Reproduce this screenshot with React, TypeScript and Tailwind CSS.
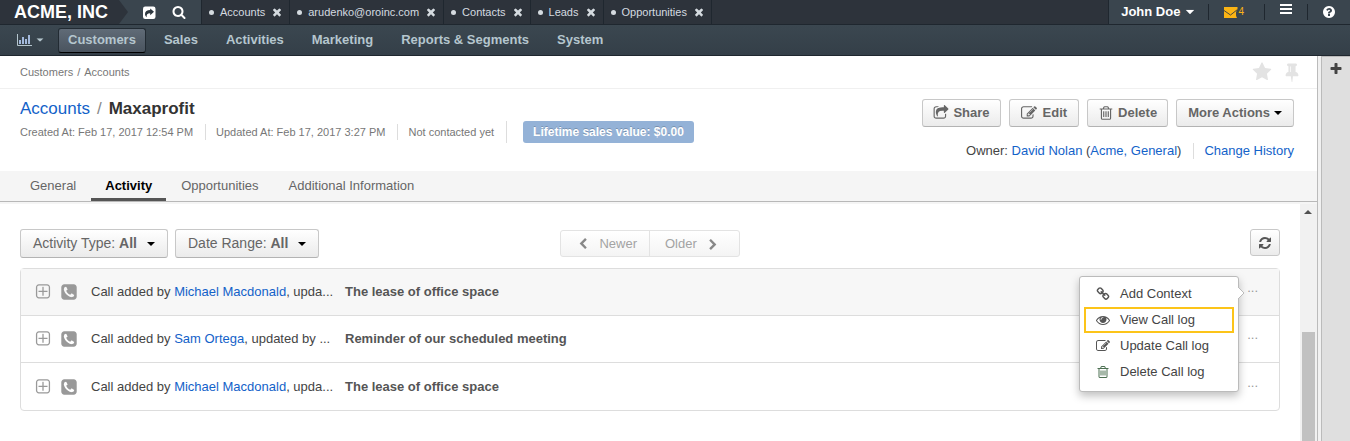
import type { ReactNode } from "react";

const paths = {
  search:
    "M1216 832q0-185-131.5-316.5t-316.5-131.5-316.5 131.5-131.5 316.5 131.5 316.5 316.5 131.5 316.5-131.5 131.5-316.5zm512 832q0 52-38 90t-90 38q-54 0-90-38l-343-342q-179 124-399 124-143 0-273.5-55.5t-225-150-150-225-55.5-273.5 55.5-273.5 150-225 225-150 273.5-55.5 273.5 55.5 225 150 150 225 55.5 273.5q0 220-124 399l343 343q37 37 37 90z",
  times:
    "M1490 1322q0 40-28 68l-136 136q-28 28-68 28t-68-28l-294-294-294 294q-28 28-68 28t-68-28l-136-136q-28-28-28-68t28-68l294-294-294-294q-28-28-28-68t28-68l136-136q28-28 68-28t68 28l294 294 294-294q28-28 68-28t68 28l136 136q28 28 28 68t-28 68l-294 294 294 294q28 28 28 68z",
  plus: "M1600 736v192q0 40-28 68t-68 28h-416v416q0 40-28 68t-68 28h-192q-40 0-68-28t-28-68v-416h-416q-40 0-68-28t-28-68v-192q0-40 28-68t68-28h416v-416q0-40 28-68t68-28h192q40 0 68 28t28 68v416h416q40 0 68 28t28 68z",
  question:
    "M1024 1376v-192q0-14-9-23t-23-9h-192q-14 0-23 9t-9 23v192q0 14 9 23t23 9h192q14 0 23-9t9-23zm256-672q0-88-55.5-163t-138.5-116-170-41q-243 0-371 213-15 24 8 42l132 100q7 6 19 6 16 0 25-12 53-68 86-92 34-24 86-24 48 0 85.5 26t37.5 59q0 38-20 61t-68 45q-63 28-115.5 86.5t-52.5 125.5v36q0 14 9 23t23 9h192q14 0 23-9t9-23q0-19 21.5-49.5t54.5-49.5q32-18 49-28.5t46-35 44.5-48 28-60.5 12.5-81zm384 192q0 209-103 385.5t-279.5 279.5-385.5 103-385.5-103-279.5-279.5-103-385.5 103-385.5 279.5-279.5 385.5-103 385.5 103 279.5 279.5 103 385.5z",
  star: "M1728 647q0 22-26 48l-363 354 86 500q1 7 1 20 0 21-10.5 35.5t-30.5 14.5q-19 0-40-12l-449-236-449 236q-22 12-40 12-21 0-31.5-14.5t-10.5-35.5q0-6 2-20l86-500-364-354q-25-27-25-48 0-37 56-46l502-73 225-455q19-41 49-41t49 41l225 455 502 73q56 9 56 46z",
  pin: "M800 864v-448q0-14-9-23t-23-9-23 9-9 23v448q0 14 9 23t23 9 23-9 9-23zm672 352q0 26-19 45t-45 19h-429l-51 483q-2 12-10.5 20.5t-20.5 8.5h-1q-27 0-32-27l-76-485h-404q-26 0-45-19t-19-45q0-123 78.5-221.5t177.5-98.5v-512q-52 0-90-38t-38-90 38-90 90-38h640q52 0 90 38t38 90-38 90-90 38v512q99 0 177.5 98.5t78.5 221.5z",
  share:
    "M1472 989v259q0 119-84.5 203.5t-203.5 84.5h-832q-119 0-203.5-84.5t-84.5-203.5v-832q0-119 84.5-203.5t203.5-84.5h255q13 0 22.5 9.5t9.5 22.5q0 27-26 32-77 26-133 60-10 4-16 4h-112q-66 0-113 47t-47 113v832q0 66 47 113t113 47h832q66 0 113-47t47-113v-214q0-19 18-29 28-13 54-37 16-16 35-8 21 9 21 29zm237-496l-384 384q-18 19-45 19-12 0-25-5-39-17-39-59v-192h-160q-323 0-438 131-119 137-74 473 3 23-20 34-8 2-12 2-16 0-26-13-10-14-21-31t-39.5-68.5-49.5-99.5-38.5-114-17.5-122q0-49 3.5-91t14-90 28-88 47-81.5 68.5-74 94.5-61.5 124.5-48.5 159.5-30.5 196.5-11h160v-192q0-42 39-59 13-5 25-5 26 0 45 19l384 384q19 19 19 45t-19 45z",
  edit: "M888 1184l116-116-152-152-116 116v56h96v96h56zm440-720q-16-16-33 1l-350 350q-17 17-1 33t33-1l350-350q17-17 1-33zm80 594v190q0 119-84.5 203.5t-203.5 84.5h-832q-119 0-203.5-84.5t-84.5-203.5v-832q0-119 84.5-203.5t203.5-84.5h832q63 0 117 25 15 7 18 23 3 17-9 29l-49 49q-14 14-32 8-23-6-45-6h-832q-66 0-113 47t-47 113v832q0 66 47 113t113 47h832q66 0 113-47t47-113v-126q0-13 9-22l64-64q15-15 35-7t20 29zm-96-738l288 288-672 672h-288v-288zm444 132l-92 92-288-288 92-92q28-28 68-28t68 28l152 152q28 28 28 68t-28 68z",
  trash:
    "M704 736v576q0 14-9 23t-23 9h-64q-14 0-23-9t-9-23v-576q0-14 9-23t23-9h64q14 0 23 9t9 23zm256 0v576q0 14-9 23t-23 9h-64q-14 0-23-9t-9-23v-576q0-14 9-23t23-9h64q14 0 23 9t9 23zm256 0v576q0 14-9 23t-23 9h-64q-14 0-23-9t-9-23v-576q0-14 9-23t23-9h64q14 0 23 9t9 23zm128 724v-948h-896v948q0 22 7 40.5t14.5 27 10.5 8.5h832q3 0 10.5-8.5t14.5-27 7-40.5zm-672-1076h448l-48-117q-7-9-17-11h-317q-10 2-17 11zm928 32v64q0 14-9 23t-23 9h-96v948q0 83-47 143.5t-113 60.5h-832q-66 0-113-58.5t-47-141.5v-952h-96q-14 0-23-9t-9-23v-64q0-14 9-23t23-9h309l70-167q15-37 54-63t79-26h320q40 0 79 26t54 63l70 167h309q14 0 23 9t9 23z",
  expand:
    "M1344 800v64q0 14-9 23t-23 9h-352v352q0 14-9 23t-23 9h-64q-14 0-23-9t-9-23v-352h-352q-14 0-23-9t-9-23v-64q0-14 9-23t23-9h352v-352q0-14 9-23t23-9h64q14 0 23 9t9 23v352h352q14 0 23 9t9 23zm128 448v-832q0-66-47-113t-113-47h-832q-66 0-113 47t-47 113v832q0 66 47 113t113 47h832q66 0 113-47t47-113zm128-832v832q0 119-84.5 203.5t-203.5 84.5h-832q-119 0-203.5-84.5t-84.5-203.5v-832q0-119 84.5-203.5t203.5-84.5h832q119 0 203.5 84.5t84.5 203.5z",
  phone:
    "M1408 1193q0-11-2-16t-18-16.5-40.5-25-47.5-26.5-45.5-25-28.5-15q-5-3-19-13t-25-15-21-5q-15 0-36.5 20.5t-39.5 45-38.5 45-33.5 20.5q-7 0-16.5-3.5t-15.5-6.5-17-9.5-14-8.5q-99-55-170-126.5t-127-170.5q-2-3-8.5-14t-9.5-17-6.5-15.5-3.5-16.5q0-13 20.5-33.5t45-38.5 45-39.5 20.5-36.5q0-10-5-21t-15-25-13-19q-3-6-15-28.5t-25-45.5-26.5-47.5-25-40.5-16.5-18-16-2q-48 0-101 22-46 21-80 94.5t-34 130.5q0 16 2.5 34t5 30.5 9 33 10 29.5 12.5 33 11 30q60 164 216.5 320.5t320.5 216.5q6 2 30 11t33 12.5 29.5 10 33 9 30.5 5 34 2.5q57 0 130.5-34t94.5-80q22-53 22-101zm256-777v960q0 119-84.5 203.5t-203.5 84.5h-960q-119 0-203.5-84.5t-84.5-203.5v-960q0-119 84.5-203.5t203.5-84.5h960q119 0 203.5 84.5t84.5 203.5z",
  eye: "M1664 960q-152-236-381-353 61 104 61 225 0 185-131.5 316.5t-316.5 131.5-316.5-131.5-131.5-316.5q0-121 61-225-229 117-381 353 133 205 333.5 326.5t434.5 121.5 434.5-121.5 333.5-326.5zm-720-384q0-20-14-34t-34-14q-125 0-214.5 89.5t-89.5 214.5q0 20 14 34t34 14 34-14 14-34q0-86 61-147t147-61q20 0 34-14t14-34zm848 384q0 34-20 69-140 230-376.5 368.5t-499.5 138.5-499.5-139-376.5-368q-20-35-20-69t20-69q140-229 376.5-368t499.5-139 499.5 139 376.5 368q20 35 20 69z",
  link: "M1520 1216q0-40-28-68l-208-208q-28-28-68-28-42 0-72 32 3 3 19 18.5t21.5 21.5 15 19 13 25.5 3.5 27.5q0 40-28 68t-68 28q-15 0-27.5-3.5t-25.5-13-19-15-21.5-21.5-18.5-19q-33 31-33 73 0 40 28 68l206 207q27 27 68 27 40 0 68-26l147-146q28-28 28-67zm-703-705q0-40-28-68l-206-207q-28-28-68-28-39 0-68 27l-147 146q-28 28-28 67 0 40 28 68l208 208q27 27 68 27 42 0 72-31-3-3-19-18.5t-21.5-21.5-15-19-13-25.5-3.5-27.5q0-40 28-68t68-28q15 0 27.5 3.5t25.5 13 19 15 21.5 21.5 18.5 19q33-31 33-73zm895 705q0 120-85 203l-147 146q-83 83-203 83-121 0-204-85l-206-207q-83-83-83-203 0-123 88-209l-88-88q-86 88-208 88-120 0-204-84l-208-208q-84-84-84-204t85-203l147-146q83-83 203-83 121 0 204 85l206 207q83 83 83 203 0 123-88 209l88 88q86-88 208-88 120 0 204 84l208 208q84 84 84 204z",
  refresh:
    "M1639 1056q0 5-1 7-64 268-268 434.5t-478 166.5q-146 0-282.5-55t-243.5-157l-129 129q-19 19-45 19t-45-19-19-45v-448q0-26 19-45t45-19h448q26 0 45 19t19 45-19 45l-137 137q71 66 161 102t187 36q134 0 250-65t186-179q11-17 53-117 8-23 30-23h192q13 0 22.5 9.5t9.5 22.5zm25-800v448q0 26-19 45t-45 19h-448q-26 0-45-19t-19-45 19-45l138-138q-148-137-349-137-134 0-250 65t-186 179q-11 17-53 117-8 23-30 23h-199q-13 0-22.5-9.5t-9.5-22.5v-7q65-268 270-434.5t480-166.5q146 0 284 55.5t245 156.5l130-129q19-19 45-19t45 19 19 45z",
  chevronLeft:
    "M1427 301l-531 531 531 531q19 19 19 45t-19 45l-166 166q-19 19-45 19t-45-19l-742-742q-19-19-19-45t19-45l742-742q19-19 45-19t45 19l166 166q19 19 19 45t-19 45z",
};

function Icon({ name, className }: { name: keyof typeof paths; className: string }) {
  return (
    <svg viewBox="0 0 1792 1792" fill="currentColor" aria-hidden="true" className={`shrink-0 ${className}`}>
      <path d={paths[name]} />
    </svg>
  );
}

function Caret({ className = "" }: { className?: string }) {
  return (
    <svg viewBox="0 0 8 4" fill="currentColor" aria-hidden="true" className={`h-1 w-2 shrink-0 ${className}`}>
      <path d="M0 0h8L4 4z" />
    </svg>
  );
}

function Btn({ children, className }: { children: ReactNode; className: string }) {
  return (
    <button
      type="button"
      className={`flex items-center rounded-[3px] border border-[#c8c8c8] border-b-[#b3b3b3] bg-linear-to-b from-white to-[#ebebeb] text-[#666] ${className}`}
    >
      {children}
    </button>
  );
}

const pinned = ["Accounts", "arudenko@oroinc.com", "Contacts", "Leads", "Opportunities"];
const sections = ["Sales", "Activities", "Marketing", "Reports & Segments", "System"];
const activities = [
  { person: "Michael Macdonald", rest: ", upda...", subject: "The lease of office space" },
  { person: "Sam Ortega", rest: ", updated by ...", subject: "Reminder of our scheduled meeting" },
  { person: "Michael Macdonald", rest: ", upda...", subject: "The lease of office space" },
];

function TopBar() {
  return (
    <div className="flex h-[25px] items-stretch border-b border-[#1f272f] bg-[#2d333b]">
      <a href="#home" className="flex items-center bg-[#3a454e] text-[18px] leading-6 font-bold text-white">
        <span className="flex h-full items-center bg-[#2d333b] pl-3.5">ACME, INC</span>
        <svg viewBox="0 0 20 24" aria-hidden="true" className="h-6 w-5">
          <path d="M0 0h11l9 12-9 12H0z" fill="#2d333b" />
        </svg>
      </a>
      <div className="flex items-center gap-4 border-r border-[#1f272f] bg-[#3a454e] pr-[15px] pl-[15px] text-white">
        <button type="button" aria-label="Shortcuts">
          <svg viewBox="0 0 13 13" aria-hidden="true" className="h-[13px] w-[13px]">
            <rect y="0.5" width="12.5" height="12.5" rx="2.2" fill="#fff" />
            <path
              d="M7.2 2.400v1.700C4 4.100 2 5.400 2 8c0 1.300.6 2.400 1.700 3.200-.4-2.600.6-3.900 3.500-3.900v1.900L11 5.800z"
              fill="#2d373f"
            />
          </svg>
        </button>
        <button type="button" aria-label="Search">
          <Icon name="search" className="h-[14px] w-[14px]" />
        </button>
      </div>
      <ul className="flex text-[11px] text-[#d5dbe0]">
        {pinned.map((label) => (
          <li key={label} className="flex items-center border-r border-[#1f272f] pr-1.5 pl-[7px]">
            <span className="mr-1.5 h-[5px] w-[5px] rounded-full bg-[#d5dbe0]" />
            <a href="#page">{label}</a>
            <button type="button" aria-label={`Close ${label}`} className="ml-1.5">
              <Icon name="times" className="h-3 w-3" />
            </button>
          </li>
        ))}
      </ul>
      <div className="ml-auto flex items-center border-l border-[#1f272f] bg-[#3a454e] text-white">
        <button type="button" className="flex items-center gap-1.5 pr-3.5 pl-3 text-[13px] leading-4 font-bold">
          John Doe
          <Caret className="scale-110" />
        </button>
        <button
          type="button"
          aria-label="4 unread emails"
          className="flex h-4 items-center border-l border-[#1f272f] pr-5 pl-[15px] text-[10px] leading-3 text-[#fbb414]"
        >
          <svg viewBox="0 0 14 11" aria-hidden="true" className="h-[11px] w-[14px]">
            <path d="M0 0h13.500v2.500Q10.500 6 13 11H0z" fill="#fbb414" />
            <path d="M0 3.500L6.500 8 13.500 2.500" fill="none" stroke="#4a4a3c" strokeWidth="1" />
          </svg>
          4
        </button>
        <button
          type="button"
          aria-label="Menu"
          className="flex h-4 items-start border-l border-[#1f272f] pr-[15px] pl-[15px]"
        >
          <svg viewBox="0 0 12 10" aria-hidden="true" className="h-2.5 w-3">
            <path d="M0 0h12v2H0zM0 4h12v2H0zM0 8h12v2H0z" fill="#fff" />
          </svg>
        </button>
        <button
          type="button"
          aria-label="Help"
          className="flex h-4 items-center border-l border-[#1f272f] pr-3.5 pl-3.5"
        >
          <Icon name="question" className="h-[14px] w-[14px]" />
        </button>
      </div>
    </div>
  );
}

function MainNav() {
  return (
    <nav className="flex h-[31px] items-center border-b border-[#1f272f] bg-linear-to-b from-[#3b4750] to-[#343f48] text-[13px] font-bold text-[#b5c6ce]">
      <button type="button" aria-label="Dashboards" className="flex items-center gap-1 pr-3.5 pl-4">
        <svg viewBox="0 0 16 12" aria-hidden="true" className="h-3 w-4">
          <path d="M1.500 0v11.500H16" fill="none" stroke="#b5c6ce" />
          <path d="M3 6h2v4H3zM6 3h2v7H6zM9 5h2v5H9zM12 1h2v9h-2z" fill="#a3b9dc" />
        </svg>
        <Caret className="scale-90" />
      </button>
      <a
        href="#customers"
        className="mr-1 flex h-[25px] items-center rounded-[3px] border border-[#222b33] border-b-black bg-linear-to-b from-[#606b77] to-[#4a545f] px-[9px]"
      >
        Customers
      </a>
      {sections.map((label) => (
        <a key={label} href="#section" className="px-3.5 whitespace-nowrap">
          {label}
        </a>
      ))}
    </nav>
  );
}

function RecordHeader() {
  return (
    <>
      <div className="flex h-[33px] items-center justify-between border-b border-[#f0f0f0] pr-[15px] pl-5 text-[11px] text-[#777]">
        <div className="flex gap-1">
          <a href="#customers">Customers</a>
          <span>/</span>
          <a href="#accounts">Accounts</a>
        </div>
        <div className="flex items-center gap-2.5 text-[#e3e3e3]">
          <button type="button" aria-label="Add to favorites">
            <Icon name="star" className="h-5 w-5" />
          </button>
          <button type="button" aria-label="Pin page">
            <Icon name="pin" className="h-5 w-5" />
          </button>
        </div>
      </div>
      <div className="flex h-[82px] justify-between pr-[23px] pl-5">
        <div className="pt-2">
          <h1 className="text-[17px] leading-6 font-bold text-[#333]">
            <a href="#accounts" className="font-normal text-[#1362c9]">
              Accounts
            </a>
            <span className="mx-[7px] font-normal text-[#888]">/</span>
            Maxaprofit
          </h1>
          <div className="flex h-[22px] items-center text-[11px] text-[#777]">
            <span className="border-r border-[#ddd] pr-3">Created At: Feb 17, 2017 12:54 PM</span>
            <span className="border-r border-[#ddd] pr-3 pl-2.5">Updated At: Feb 17, 2017 3:27 PM</span>
            <span className="flex h-full items-center border-r border-[#ddd] pr-3 pl-2.5">Not contacted yet</span>
            <span className="ml-4 flex h-full items-center rounded-[3px] bg-[#94b2d7] px-2.5 text-[12px] font-bold text-white text-shadow-[0_-1px_0_rgba(0,0,0,0.2)]">
              Lifetime sales value: $0.00
            </span>
          </div>
        </div>
        <div className="flex flex-col items-end gap-[15px] pt-2.5 text-[13px]">
          <div className="flex gap-2 font-bold">
            <Btn className="h-7 gap-1 px-2.5">
              <Icon name="share" className="h-4 w-4" />
              Share
            </Btn>
            <Btn className="h-7 gap-1.5 px-[11px]">
              <Icon name="edit" className="h-4 w-4" />
              Edit
            </Btn>
            <Btn className="h-7 gap-1 px-2.5">
              <Icon name="trash" className="h-4 w-4" />
              Delete
            </Btn>
            <Btn className="h-7 gap-1 px-[11px]">
              More Actions
              <Caret className="text-black" />
            </Btn>
          </div>
          <div className="flex items-center leading-[18px] text-[#444]">
            <span>
              Owner:{" "}
              <a href="#owner" className="text-[#1362c9]">
                David Nolan
              </a>{" "}
              (
              <a href="#organization" className="text-[#1362c9]">
                Acme, General
              </a>
              )
            </span>
            <a href="#history" className="ml-3 border-l border-[#ddd] pl-2.5 leading-4 text-[#1362c9]">
              Change History
            </a>
          </div>
        </div>
      </div>
      <nav className="flex h-[31px] border-b border-[#b8b8b8] bg-[#f5f5f5] pl-[15px] text-[13px] text-[#666]">
        <a href="#general" className="px-[15px] leading-[29px]">
          General
        </a>
        <a href="#activity" className="border-b-[3px] border-[#555] px-3.5 leading-[29px] font-bold text-black">
          Activity
        </a>
        <a href="#opportunities" className="px-[15px] leading-[29px]">
          Opportunities
        </a>
        <a href="#additional" className="px-[15px] leading-[29px]">
          Additional Information
        </a>
      </nav>
    </>
  );
}

function ActionMenu() {
  return (
    <div className="absolute top-[7px] right-10 z-10 w-40 rounded-[3px] border border-[#bbb] bg-white px-1 pt-1 pb-[6px] text-[13px] text-[#444] shadow-[0_4px_8px_rgba(0,0,0,0.25)]">
      <svg viewBox="0 0 7 12" aria-hidden="true" className="absolute top-[10px] -right-[7px] h-3 w-[7px]">
        <path d="M0 0l6 6-6 6" fill="#fff" stroke="#bbb" />
      </svg>
      <button type="button" className="flex h-[26px] w-full items-center gap-2.5 px-3">
        <Icon name="link" className="h-[14px] w-[14px] text-[#555]" />
        Add Context
      </button>
      <button
        type="button"
        className="flex h-[26px] w-full items-center gap-2.5 px-3 outline-2 -outline-offset-2 outline-[#fcc419]"
      >
        <Icon name="eye" className="h-[14px] w-[14px] text-[#555]" />
        View Call log
      </button>
      <button type="button" className="flex h-[26px] w-full items-center gap-2.5 px-3">
        <Icon name="edit" className="h-[14px] w-[14px] text-[#555]" />
        Update Call log
      </button>
      <button type="button" className="flex h-[26px] w-full items-center gap-2.5 px-3">
        <Icon name="trash" className="h-[14px] w-[14px] text-[#4d7052]" />
        Delete Call log
      </button>
    </div>
  );
}

function ActivityList() {
  return (
    <section className="flex-1 pt-[25px] pr-5 pb-7 pl-5 text-[13px]">
      <div className="flex items-start">
        <div className="flex flex-1 gap-[7px] text-[14px]">
          <Btn className="h-[29px] px-3">
            Activity Type:&nbsp;<b>All</b>
            <Caret className="ml-2.5 text-black" />
          </Btn>
          <Btn className="h-[29px] px-3">
            Date Range:&nbsp;<b>All</b>
            <Caret className="ml-2.5 text-black" />
          </Btn>
        </div>
        <div className="mt-px flex h-[27px] rounded-[3px] border border-[#e3e3e3] bg-linear-to-b from-white to-[#f4f4f4] text-[13px] text-[#a3a3a3]">
          <button type="button" disabled className="flex w-[89px] items-center justify-end gap-2.5 border-r border-[#e3e3e3] pr-3">
            <Icon name="chevronLeft" className="h-3 w-3 text-[#888]" />
            Newer
          </button>
          <button type="button" disabled className="flex w-[89px] items-center gap-2.5 pl-[15px]">
            Older
            <Icon name="chevronLeft" className="h-3 w-3 rotate-180 text-[#888]" />
          </button>
        </div>
        <div className="flex flex-1 justify-end">
          <button
            type="button"
            aria-label="Refresh"
            className="flex h-[27px] w-[30px] items-center justify-center rounded-[3px] border border-[#c8c8c8] bg-linear-to-b from-white to-[#ebebeb] text-[#555]"
          >
            <Icon name="refresh" className="h-[14px] w-[14px]" />
          </button>
        </div>
      </div>
      <ul className="mt-2.5 rounded-[4px] border border-[#ddd]">
        {activities.map((item, index) => (
          <li
            key={index}
            className="relative flex h-[47px] items-center border-b border-[#ddd] pr-[21px] pl-[13px] text-[#444] first:bg-[#f7f7f7] last:border-b-0"
          >
            <button type="button" aria-label="Expand" className="text-[#999]">
              <Icon name="expand" className="h-[18px] w-[18px]" />
            </button>
            <Icon name="phone" className="ml-2 h-[18px] w-[18px] text-[#999]" />
            <p className="ml-[13px] w-[254px] shrink-0 whitespace-nowrap">
              Call added by{" "}
              <a href="#user" className="text-[#1362c9]">
                {item.person}
              </a>
              {item.rest}
            </p>
            <p className="flex-1 font-bold text-[#555]">{item.subject}</p>
            <button type="button" aria-label="More actions" className="pb-2 text-[#999]">
              ...
            </button>
            {index === 0 && <ActionMenu />}
          </li>
        ))}
      </ul>
    </section>
  );
}

export default function App() {
  return (
    <div className="flex min-h-screen flex-col bg-white font-['Liberation_Sans',Arial,sans-serif]">
      <header>
        <TopBar />
        <MainNav />
      </header>
      <div className="flex flex-1">
        <main className="flex min-w-0 flex-1 flex-col">
          <RecordHeader />
          <div className="flex flex-1 border-t-2 border-[#f5f5f5]">
            <ActivityList />
            <div className="flex w-[17px] flex-col bg-[#f1f1f1] px-0.5 pt-1.5">
              <Caret className="ml-0.5 rotate-180 text-[#505050]" />
              <div className="mt-[118px] flex-1 bg-[#c1c1c1]" />
            </div>
          </div>
        </main>
        <aside className="flex w-[33px] flex-col border-l border-[#bbb] bg-[#f1f1f1] pl-[3px]">
          <div className="flex-1 border-t border-l border-[#bbb] bg-[#dfdfdf] pt-0.5 pl-[7px] text-[#444]">
            <button type="button" aria-label="Add widget">
              <Icon name="plus" className="h-[14px] w-[14px]" />
            </button>
          </div>
        </aside>
      </div>
    </div>
  );
}
